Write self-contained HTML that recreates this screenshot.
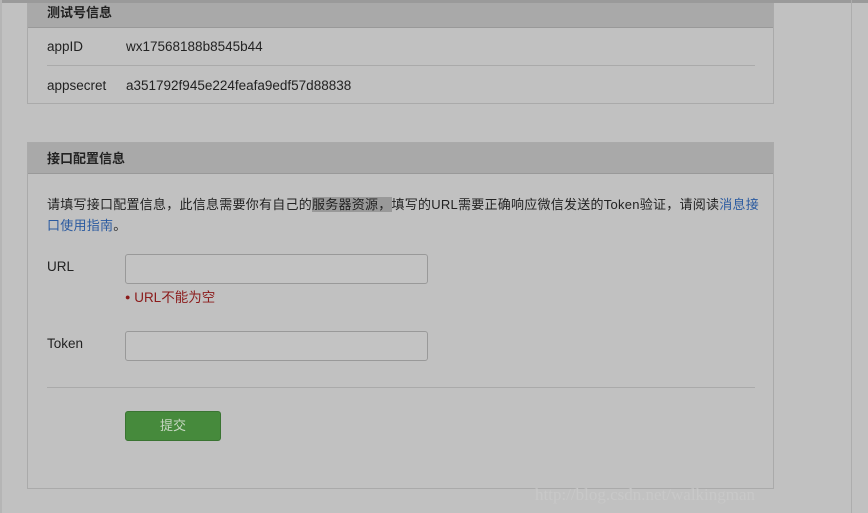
<!DOCTYPE html>
<html><head><meta charset="utf-8"><style>
*{margin:0;padding:0;box-sizing:border-box}
body{width:868px;height:513px;background:#c1c1c1;font-family:"Liberation Sans","Noto Sans CJK SC",sans-serif;font-size:13px;color:#222;position:relative;overflow:hidden}
.top{position:absolute;left:0;top:0;width:868px;height:3px;background:#9a9a9a}
.lft{position:absolute;left:0;top:0;width:2px;height:513px;background:#b5b5b5}
.vr{position:absolute;left:851px;top:0;width:1px;height:513px;background:#adadad}
.panel{position:absolute;left:27px;width:747px;border:1px solid #aaa;border-top:none;background:#c1c1c1}
.hd{background:#a9a9a9;border-bottom:1px solid #999;height:25px;font-weight:bold;padding-left:19px;line-height:22px;font-size:13px;color:#222}
.row{position:absolute;left:19px;font-size:13.5px}
.in{position:absolute;width:303px;height:30px;border:1px solid #999;border-radius:3px;background:#c3c3c3}
a{color:#2a5aa0;text-decoration:none}
</style></head><body>
<div class="top"></div><div class="lft"></div><div class="vr"></div>
<div class="panel" style="top:3px;height:101px">
 <div class="hd" style="height:25px;line-height:20px">测试号信息</div>
 <div class="row" style="top:36px">appID<span style="position:absolute;left:79px;white-space:nowrap">wx17568188b8545b44</span></div>
 <div style="position:absolute;left:19px;top:62px;width:708px;height:1px;background:#aaa"></div>
 <div class="row" style="top:75px">appsecret<span style="position:absolute;left:79px;white-space:nowrap">a351792f945e224feafa9edf57d88838</span></div>
</div>
<div class="panel" style="top:142px;height:347px;border-top:1px solid #aaa">
 <div class="hd" style="height:31px;line-height:31px">接口配置信息</div>
 <div style="position:absolute;left:19px;top:51px;width:712px;line-height:21px;font-size:13px;letter-spacing:0.25px">请填写接口配置信息，此信息需要你有自己的<span style="background:#999">服务器资源，</span>填写的URL需要正确响应微信发送的Token验证，请阅读<a>消息接口使用指南</a>。</div>
 <div class="row" style="top:116px">URL</div>
 <div class="in" style="left:97px;top:111px"></div>
 <div style="position:absolute;left:97px;top:143px;color:#8b1a1a;font-size:13.5px"><span style="font-size:9px;vertical-align:2px">●</span> URL不能为空</div>
 <div class="row" style="top:193px">Token</div>
 <div class="in" style="left:97px;top:188px"></div>
 <div style="position:absolute;left:19px;top:244px;width:708px;height:1px;background:#aaa"></div>
 <div style="position:absolute;left:97px;top:268px;width:96px;height:30px;background:#468a3c;border:1px solid #3a7432;border-radius:3px;color:#c8d8c4;text-align:center;line-height:28px;font-size:13px">提交</div>
</div>
<div style="position:absolute;left:535px;top:485px;font-family:'Liberation Serif',serif;font-size:17px;color:#c8c8c8;white-space:nowrap">http://blog.csdn.net/walkingman</div>
</body></html>
